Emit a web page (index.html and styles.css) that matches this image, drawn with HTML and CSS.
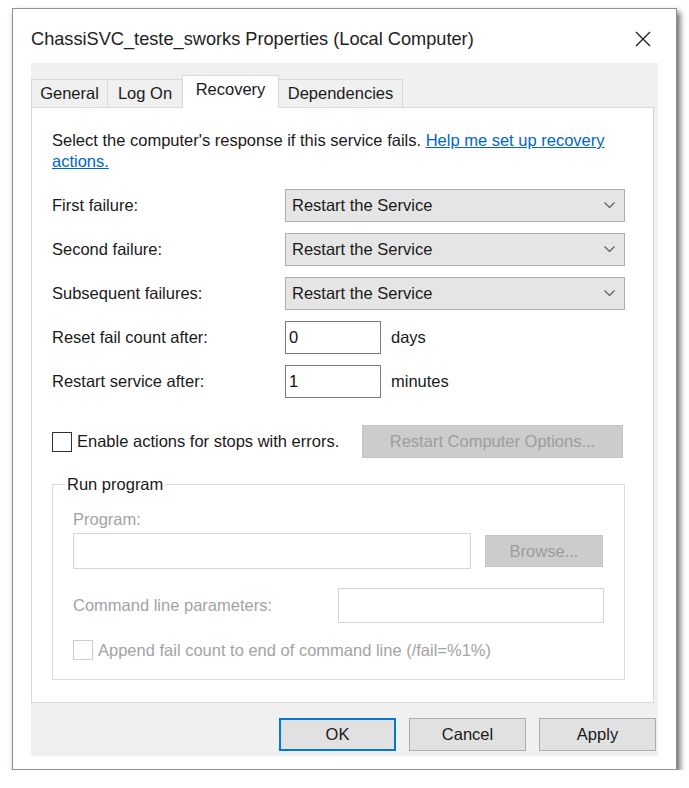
FILE: index.html
```html
<!DOCTYPE html>
<html lang="en">
<head>
  <meta charset="UTF-8">
  <meta name="viewport" content="width=device-width, initial-scale=1.0">
  <title>ChassiSVC_teste_sworks Properties (Local Computer)</title>
  <link rel="stylesheet" href="styles.css">
</head>
<body>
  <div class="window">
    <div class="titlebar">
      <span class="title">ChassiSVC_teste_sworks Properties (Local Computer)</span>
      <svg class="close" width="16" height="16" viewBox="0 0 16 16">
        <path d="M1 1 L15 15 M15 1 L1 15" stroke="#222" stroke-width="1.4" fill="none"/>
      </svg>
    </div>

    <div class="client">
      <div class="tabs">
        <div class="tab">General</div>
        <div class="tab">Log On</div>
        <div class="tab active">Recovery</div>
        <div class="tab">Dependencies</div>
      </div>

      <div class="panel">
        <p class="intro">Select the computer's response if this service fails. <a href="#">Help me set up recovery<br>actions.</a></p>

        <div class="form-grid">
          <label>First failure:</label>
          <div class="combo"><span>Restart the Service</span><svg width="11" height="7" viewBox="0 0 11 7"><path d="M0.5 0.5 L5.5 5.5 L10.5 0.5" stroke="#555" stroke-width="1.1" fill="none"/></svg></div>

          <label>Second failure:</label>
          <div class="combo"><span>Restart the Service</span><svg width="11" height="7" viewBox="0 0 11 7"><path d="M0.5 0.5 L5.5 5.5 L10.5 0.5" stroke="#555" stroke-width="1.1" fill="none"/></svg></div>

          <label>Subsequent failures:</label>
          <div class="combo"><span>Restart the Service</span><svg width="11" height="7" viewBox="0 0 11 7"><path d="M0.5 0.5 L5.5 5.5 L10.5 0.5" stroke="#555" stroke-width="1.1" fill="none"/></svg></div>

          <label>Reset fail count after:</label>
          <div class="field-row"><input class="num" type="text" value="0"><span class="unit">days</span></div>

          <label>Restart service after:</label>
          <div class="field-row"><input class="num" type="text" value="1"><span class="unit">minutes</span></div>
        </div>

        <div class="check-row">
          <label class="check"><input type="checkbox"> Enable actions for stops with errors.</label>
          <button class="btn disabled-btn restart-btn" disabled>Restart Computer Options...</button>
        </div>

        <fieldset class="group">
          <legend>Run program</legend>
          <div class="muted prog-label">Program:</div>
          <div class="prog-row">
            <input class="prog-input" type="text" disabled>
            <button class="btn disabled-btn browse-btn" disabled>Browse...</button>
          </div>
          <div class="cmd-row">
            <span class="muted">Command line parameters:</span>
            <input class="cmd-input" type="text" disabled>
          </div>
          <label class="check muted append"><input type="checkbox" disabled> Append fail count to end of command line (/fail=%1%)</label>
        </fieldset>
      </div>

      <div class="buttons">
        <button class="btn default-btn">OK</button>
        <button class="btn">Cancel</button>
        <button class="btn">Apply</button>
      </div>
    </div>
  </div>
</body>
</html>
```

FILE: styles.css
```css
body {
  margin: 0;
  padding: 0;
  background-color: #fff;
  font-family: "Liberation Sans", Arial, sans-serif;
  font-size: 16.5px;
  color: #1a1a1a;
}
.window {
  margin: 8px 0 0 12px;
  width: 663px;
  height: 760px;
  border: 1px solid #8f8f8f;
  background-color: #fff;
  box-shadow: 3px 4px 6px rgba(0, 0, 0, 0.6);
  display: flex;
  flex-direction: column;
}
.titlebar {
  height: 54px;
  display: flex;
  align-items: center;
  padding: 6px 25px 0 18px;
  box-sizing: border-box;
}
.title {
  font-size: 18.2px;
  color: #222;
  flex: 1;
}
.close {
  display: block;
}
.client {
  margin: 0 18px 13px 18px;
  height: 693px;
  background-color: #f0f0f0;
  display: flex;
  flex-direction: column;
}
.tabs {
  height: 44px;
  display: flex;
  align-items: flex-end;
  position: relative;
  z-index: 1;
}
.tab {
  height: 28px;
  box-sizing: border-box;
  border: 1px solid #d9d9d9;
  border-bottom: none;
  margin-right: -1px;
  padding: 4px 0 0 0;
  text-align: center;
  background-color: #f0f0f0;
}
.tab:nth-child(1) { width: 77px; }
.tab:nth-child(2) { width: 76px; }
.tab:nth-child(3) { width: 97px; }
.tab:nth-child(4) { width: 125px; }
.tab.active {
  height: 33px;
  margin-bottom: -1px;
  padding-top: 4px;
  background-color: #fff;
}
.panel {
  height: 596px;
  box-sizing: border-box;
  width: 623px;
  background-color: #fff;
  border: 1px solid #d9d9d9;
  padding: 0 20px;
}
.intro {
  margin: 22px 0 0 0;
  line-height: 21px;
  white-space: nowrap;
}
.intro a {
  color: #0066cc;
}
.form-grid {
  margin-top: 17px;
  display: grid;
  grid-template-columns: 233px 340px;
  row-gap: 11px;
  align-items: center;
}
.combo {
  height: 33px;
  box-sizing: border-box;
  border: 1px solid #adadad;
  background-color: #e5e5e5;
  display: flex;
  align-items: center;
  justify-content: space-between;
  padding: 0 9px 0 6px;
}
.field-row {
  display: flex;
  align-items: center;
}
input {
  font-family: inherit;
  font-size: inherit;
  color: #111;
  margin: 0;
  box-sizing: border-box;
  background-color: #fff;
}
.num {
  width: 96px;
  height: 33px;
  border: 1px solid #7a7a7a;
  padding: 0 3px;
}
.unit {
  margin-left: 10px;
}
.check-row {
  margin-top: 27px;
  width: 571px;
  display: flex;
  align-items: center;
  justify-content: space-between;
}
.check {
  display: flex;
  align-items: center;
  gap: 5px;
}
input[type="checkbox"] {
  appearance: none;
  -webkit-appearance: none;
  width: 20px;
  height: 20px;
  border: 1px solid #333;
  background-color: #fff;
}
input[type="checkbox"]:disabled {
  border-color: #cccccc;
}
.btn {
  font-family: inherit;
  font-size: inherit;
  color: #1a1a1a;
  width: 117px;
  height: 33px;
  border: 1px solid #adadad;
  background-color: #e1e1e1;
  padding: 0;
}
.disabled-btn {
  background-color: #cccccc;
  border-color: #c4c4c4;
  color: #9c9c9c;
}
.restart-btn {
  width: 261px;
}
.browse-btn {
  width: 118px;
  height: 32px;
}
.group {
  margin: 16px 0 0 0;
  width: 573px;
  box-sizing: border-box;
  border: 1px solid #dcdcdc;
  padding: 14px 20px 19px 20px;
}
.group legend {
  padding: 0 2px;
  margin-left: -8px;
  line-height: 21px;
}
.muted {
  color: #a3a3a3;
}
.prog-label {
  line-height: 21px;
}
.prog-row {
  margin-top: 3px;
  display: flex;
  align-items: center;
  gap: 14px;
}
.prog-input {
  width: 398px;
  height: 36px;
  border: 1px solid #d4d4d4;
}
.cmd-row {
  margin-top: 19px;
  display: flex;
  align-items: center;
  justify-content: space-between;
  width: 531px;
}
.cmd-input {
  width: 266px;
  height: 35px;
  border: 1px solid #d4d4d4;
}
.append {
  margin-top: 17px;
}
.buttons {
  height: 53px;
  box-sizing: border-box;
  padding: 15px 2px 0 0;
  display: flex;
  justify-content: flex-end;
  gap: 13px;
}
.default-btn {
  border: 2px solid #0078d7;
}
```
